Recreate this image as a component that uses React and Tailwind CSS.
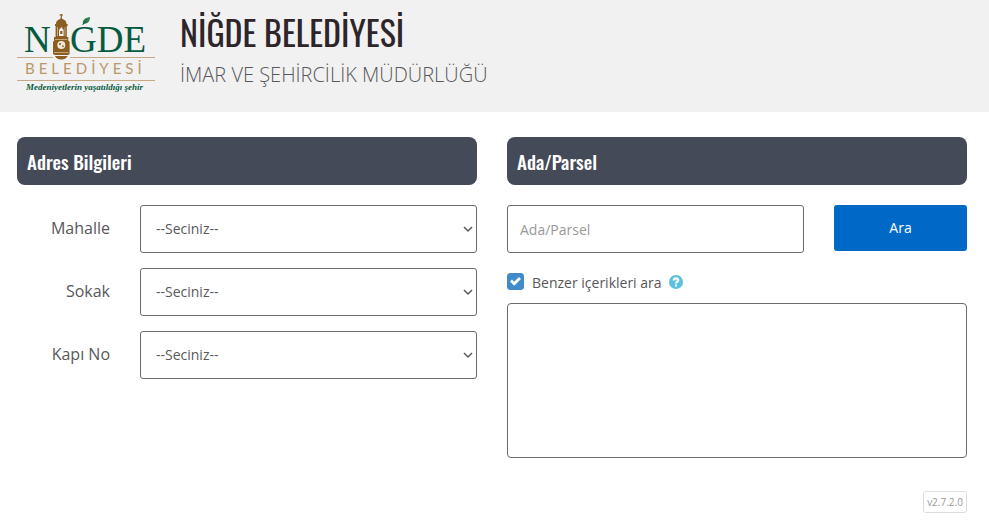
const condensed = "font-['Oswald',sans-serif]";

function Logo() {
  return (
    <svg className="h-[84px] w-[138px] shrink-0" viewBox="0 0 138 84" role="img" aria-label="Niğde Belediyesi">
      <g fill="#075b40" fontFamily="'Liberation Serif', serif" fontSize="37">
        <text x="7" y="40">N</text>
        <text x="53" y="40">GDE</text>
      </g>
      <path d="M66 12c-1-3 1-6 7-7 0 5-3 7-7 7Z" fill="#2f7f4e" />
      <path d="M65.500 13l4-4.500" stroke="#075b40" strokeWidth="1" />
      <g fill="#8a5d20">
        <path d="M43.700 2h1.200v5h-1.200z" />
        <path d="M42.500 2.500h3.500v1h-3.500z" />
        <path d="M39 12c0-4 3-4 5.300-6 2.300 2 5.300 2 5.300 6Z" />
        <path d="M38 12h12.600v2h-.8v11h1.500v3H37v-3h1.600V14H38z" />
        <path d="M37.500 28h13.500l1.600 2v12l-1.600 1H37.500l-1.500-1V30z" />
        <path d="M38 44h12.600c-1 2-2.600 3.500-6.300 3.500S39 46 38 44z" />
      </g>
      <path d="M42 24v-6l2.300-3 2.300 3v6z" fill="#f1f1f1" />
      <path d="M43.200 22v-3h2.200v3z" fill="#8a5d20" />
      <path d="M40.500 15v9M48 15v9" stroke="#c7a477" strokeWidth="1" />
      <circle cx="44.300" cy="33" r="4" fill="#f1e7d8" />
      <path d="M42 31h2v2h-2zM45 33.500h2v1.500h-2z" fill="#a37a43" />
      <path d="M37 40.500h14.500M38 27.500h12.500" stroke="#c7a477" strokeWidth="1" />
      <path d="M0 45.500h36M53 45.500h85M0 68.500h138" stroke="#c6a983" strokeWidth="1" />
      <text x="8" y="62" fill="#b99768" fontFamily="Lato, sans-serif" fontSize="15" className="tracking-[4px]">BELEDİYESİ</text>
      <text x="9" y="78" fill="#075b40" fontFamily="'Liberation Serif', serif" fontSize="9" fontStyle="italic" fontWeight="700">Medeniyetlerin yaşatıldığı şehir</text>
    </svg>
  );
}

function PanelTitle({ children }) {
  return (
    <h2 className={`${condensed} mb-5 flex h-12 items-center rounded-lg bg-[#454a58] px-2.5 text-[19px] font-medium text-white`}>
      {children}
    </h2>
  );
}

function SelectRow({ id, label }) {
  return (
    <div className="mb-[15px] flex h-12 gap-[30px]">
      <label htmlFor={id} className="w-[93px] shrink-0 pt-[11px] text-right text-base">
        {label}
      </label>
      <div className="grid flex-1 items-center">
        <select id={id} className="col-start-1 row-start-1 h-12 w-full appearance-none rounded-[3px] border border-[#6b6b6e] bg-white px-[15px] text-sm text-[#58585b]">
          <option>--Seciniz--</option>
        </select>
        <svg className="pointer-events-none col-start-1 row-start-1 mr-1 h-2.5 w-2.5 justify-self-end" viewBox="0 0 10 10" fill="none" stroke="#58585b" strokeWidth="1.500" aria-hidden="true">
          <path d="M1 3l4 4 4-4" />
        </svg>
      </div>
    </div>
  );
}

export default function App() {
  return (
    <div className="min-h-screen bg-white font-['Open_Sans','Noto_Sans',sans-serif] text-[#58585b]">
      <header className="flex h-28 gap-[25px] bg-[#f1f1f1] pl-[17px] pt-3">
        <Logo />
        <div>
          <h1 className={`${condensed} text-[34px] leading-10 text-[#2d2529]`}>NİĞDE BELEDİYESİ</h1>
          <p className="mt-2 text-xl leading-[30px] font-light">İMAR VE ŞEHİRCİLİK MÜDÜRLÜĞÜ</p>
        </div>
      </header>

      <main className="grid grid-cols-2 gap-[30px] pt-[25px] pr-[22px] pl-[17px]">
        <section>
          <PanelTitle>Adres Bilgileri</PanelTitle>
          <SelectRow id="mahalle" label="Mahalle" />
          <SelectRow id="sokak" label="Sokak" />
          <SelectRow id="kapi" label="Kapı No" />
        </section>

        <section>
          <PanelTitle>Ada/Parsel</PanelTitle>
          <div className="flex gap-[30px]">
            <input type="text" aria-label="Ada/Parsel" placeholder="Ada/Parsel" className="h-12 min-w-0 flex-1 rounded-[3px] border border-[#6b6b6e] px-3 text-sm placeholder:text-[#999999]" />
            <button type="button" className="h-[46px] w-[133px] rounded-[3px] bg-[#0069c8] text-sm font-medium text-white">Ara</button>
          </div>
          <div className="mt-5 flex h-5 items-center">
            <label className="flex items-center gap-2 text-sm">
              <span className="grid h-5 w-[17px]">
                <input type="checkbox" defaultChecked className="peer col-start-1 row-start-1 h-[17px] w-[17px] appearance-none rounded-[3px] border border-[#428bca] checked:bg-[#428bca]" />
                <svg className="pointer-events-none invisible col-start-1 row-start-1 h-[17px] w-[17px] peer-checked:visible" viewBox="0 0 17 17" fill="none" stroke="white" strokeWidth="2.800" aria-hidden="true">
                  <path d="M4 7.500l3.200 3.200L13 5" />
                </svg>
              </span>
              Benzer içerikleri ara
            </label>
            <svg className="ml-[7px] mb-0.5 h-3.5 w-3.5" viewBox="0 0 14 14" role="img" aria-label="Yardım">
              <circle cx="7" cy="7" r="7" fill="#5bc0de" />
              <path d="M4.800 5.400C4.800 2.600 9.200 2.700 9.200 5.200c0 1.600-2.200 1.500-2.200 3.200" fill="none" stroke="white" strokeWidth="2.200" />
              <path d="M6 9.600h2v2H6z" fill="white" />
            </svg>
          </div>
          <textarea aria-label="Sonuçlar" className="mt-2.5 block h-[155px] w-full resize-none rounded-[4px] border border-[#6b6b6e] p-3 text-sm" />
        </section>
      </main>

      <footer className="flex justify-end pt-[33px] pr-[22px]">
        <span className="flex h-[22px] w-11 items-center justify-center rounded-[3px] border border-[#dddddd] text-[10px] text-[#999999]">v2.7.2.0</span>
      </footer>
    </div>
  );
}
